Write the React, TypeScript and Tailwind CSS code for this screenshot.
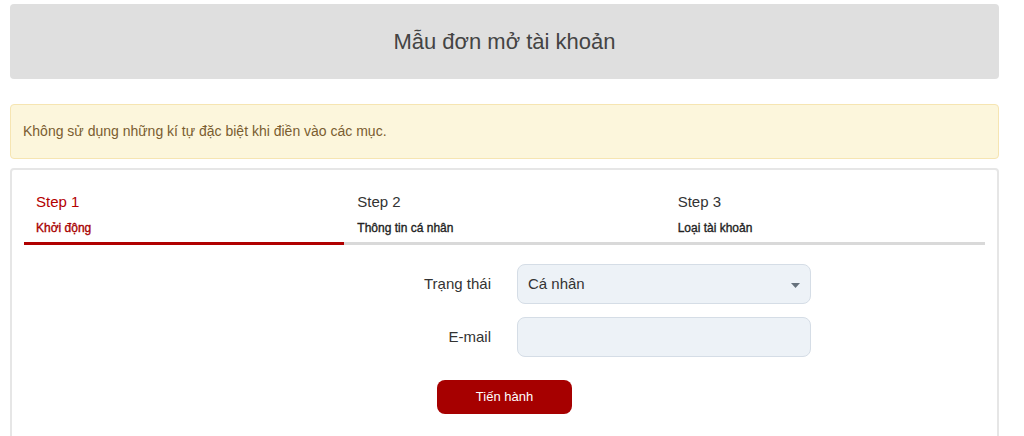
import React from "react";

export default function App() {
  const font = { fontFamily: '"Liberation Sans", Arial, sans-serif' };
  return (
    <div className="w-[1024px] h-[436px] overflow-hidden bg-white pl-[10px] pt-[4px]" style={font}>
      <div className="w-[989px]">
        <div className="h-[75px] rounded-[4px] bg-[#dfdfdf] flex items-center justify-center">
          <h1 className="text-[22px] leading-none text-[#444444] font-normal">Mẫu đơn mở tài khoản</h1>
        </div>

        <div className="mt-[25px] h-[55px] rounded-[4px] border border-[#f6e5b2] bg-[#fcf6dc] flex items-center pl-[12px]">
          <p className="text-[14px] text-[#7a5d30]">Không sử dụng những kí tự đặc biệt khi điền vào các mục.</p>
        </div>

        <div className="mt-[9px] h-[300px] rounded-[4px] border-2 border-[#e6e6e6] px-[12px] pt-[23px]">
          <div className="grid grid-cols-3">
            <div className="pl-[12px]">
              <div className="text-[15px] leading-[18px] text-[#b30000]">Step 1</div>
              <div className="mt-[9px] text-[12px] leading-[16px] text-[#a80000] [-webkit-text-stroke:0.35px_currentColor]">Khởi động</div>
              <div className="mt-[6px] -ml-[12px] h-[3px] bg-[#b00000]" />
            </div>
            <div className="pl-[13px]">
              <div className="text-[15px] leading-[18px] text-[#333333]">Step 2</div>
              <div className="mt-[9px] text-[12px] leading-[16px] text-[#222222] [-webkit-text-stroke:0.35px_currentColor]">Thông tin cá nhân</div>
              <div className="mt-[6px] -ml-[13px] h-[3px] bg-[#d9d9d9]" />
            </div>
            <div className="pl-[13px]">
              <div className="text-[15px] leading-[18px] text-[#333333]">Step 3</div>
              <div className="mt-[9px] text-[12px] leading-[16px] text-[#222222] [-webkit-text-stroke:0.35px_currentColor]">Loại tài khoản</div>
              <div className="mt-[6px] -ml-[13px] h-[3px] bg-[#d9d9d9]" />
            </div>
          </div>

          <div className="mt-[19px] grid grid-cols-[467px_294px] gap-x-[26px] gap-y-[13px] items-center">
            <label className="text-right text-[15px] text-[#333333]">Trạng thái</label>
            <div className="relative h-[40px] rounded-[8px] border border-[#d5dde6] bg-[#edf2f7] flex items-center pl-[10px]">
              <span className="text-[15px] text-[#333333]">Cá nhân</span>
              <svg className="absolute right-[10px] top-[18px]" width="9" height="5" viewBox="0 0 9 5">
                <path d="M0 0 L9 0 L4.5 5 Z" fill="#66717c" />
              </svg>
            </div>
            <label className="text-right text-[15px] text-[#333333]">E-mail</label>
            <div className="h-[40px] rounded-[8px] border border-[#d5dde6] bg-[#edf2f7]" />
          </div>

          <div className="mt-[23px] flex justify-center">
            <button className="w-[135px] h-[34px] rounded-[8px] bg-[#a60000] text-white text-[13px]">Tiến hành</button>
          </div>
        </div>
      </div>
    </div>
  );
}
